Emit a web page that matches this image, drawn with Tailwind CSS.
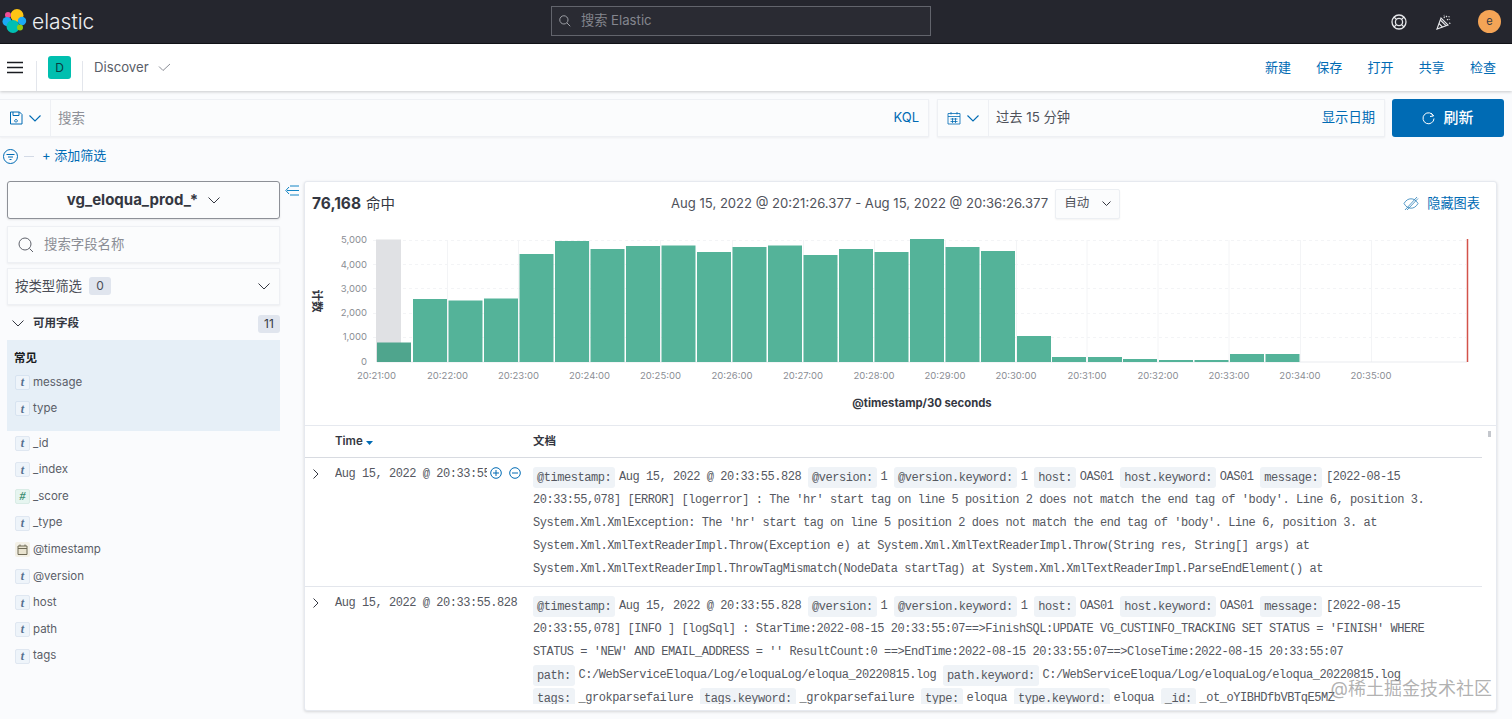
<!DOCTYPE html>
<html lang="zh">
<head>
<meta charset="utf-8">
<title>Discover - Elastic</title>
<script src="https://cdn.jsdelivr.net/npm/@tailwindcss/browser@4"></script>
</head>
<body class="h-[719px] w-[1512px] overflow-hidden bg-[#fafbfd] font-['Inter','Noto_Sans_CJK_SC',sans-serif] text-[#343741]">

<!-- top nav -->
<header class="flex h-[44px] items-center border-b border-[#111318] bg-[#25262e] pr-[11px] pl-[2px]">
  <div class="flex w-[549px] items-center gap-[5px]">
    <svg class="mb-[2px] h-[24px] w-[25px]" viewBox="0 0 25 24">
      <circle cx="15" cy="6.500" r="6.500" fill="#fec514"/>
      <circle cx="6" cy="6" r="3" fill="#f04e98"/>
      <circle cx="5" cy="12.500" r="4.500" fill="#1ba9f5"/>
      <circle cx="11" cy="17.500" r="6.500" fill="#00bfb3"/>
      <circle cx="20" cy="12" r="4.200" fill="#1ba9f5"/>
      <circle cx="18" cy="18.500" r="3" fill="#93c90e"/>
    </svg>
    <span class="text-[21px] leading-none font-light text-[#eef0f3]">elastic</span>
  </div>
  <div class="mb-[1px] flex h-[30px] w-[380px] items-center gap-[10px] border border-[#62646c] bg-[#2a2b33] px-[7px] text-[13.200px] text-[#84868e]">
    <svg class="h-[12px] w-[12px]" viewBox="0 0 16 16" fill="none" stroke="#a0a2a9" stroke-width="1.300"><circle cx="6.500" cy="6.500" r="5.500"/><path d="M10.500 10.500 15 15"/></svg>
    <span>搜索 Elastic</span>
  </div>
  <div class="flex flex-1 items-center justify-end">
    <svg class="mr-[29px] h-[16px] w-[16px]" viewBox="0 0 16 16" fill="none" stroke="#e6e7ea" stroke-width="1.300"><circle cx="8" cy="8" r="7"/><circle cx="8" cy="8" r="3.600"/><path d="M3 3l2.400 2.400M13 3l-2.400 2.400M3 13l2.400-2.400M13 13l-2.400-2.400"/></svg>
    <svg class="mr-[26px] h-[16px] w-[16px]" viewBox="0 0 16 16" fill="none" stroke="#e6e7ea" stroke-width="1.100"><path d="M1 15 5 4l7 7z"/><path d="M3 9.500 6.500 13M4.300 6 10 11.700"/><path d="M8 4c.5-1 .5-2 0-3M11 6c1-1 2-1 3-.5M10 3l1-1M13 9l1.500 .5M12.500 2.500l1 .5" stroke-dasharray="1.500 1"/></svg>
    <div class="flex h-[23px] w-[23px] items-center justify-center rounded-full bg-[#f4a456] text-[11px] text-[#343741]">e</div>
  </div>
</header>

<!-- breadcrumb bar -->
<div class="flex h-[47px] items-stretch justify-between bg-white shadow-[0_1px_3px_rgba(0,0,0,0.2)]">
  <div class="flex items-stretch">
    <div class="flex w-[36px] items-center pl-[7px]">
      <svg class="h-[13px] w-[16px]" viewBox="0 0 16 13" fill="none" stroke="#1a1c21" stroke-width="1.500"><path d="M0 1.500h16M0 6.500h16M0 11.500h16"/></svg>
    </div>
    <span class="h-[30px] w-px self-end bg-[#e3e6ec]"></span>
    <div class="flex w-[45px] items-center justify-center">
      <div class="flex h-[23px] w-[23px] items-center justify-center rounded-[3px] bg-[#00bfaf] text-[12px] text-[#0b3b3f]">D</div>
    </div>
    <span class="h-[30px] w-px self-end bg-[#e3e6ec]"></span>
    <div class="flex items-center gap-[9px] pl-[11px] text-[13.200px] text-[#5a5e68]">
      <span>Discover</span>
      <svg class="h-[9px] w-[13px]" viewBox="0 0 13 9" fill="none" stroke="#8a8d96" stroke-width="1"><path d="m1 3.500 4 4L12 1"/></svg>
    </div>
  </div>
  <nav class="flex items-center gap-[25.250px] pr-[16px] text-[13px] text-[#006bb4]">
    <a>新建</a><a>保存</a><a>打开</a><a>共享</a><a>检查</a>
  </nav>
</div>

<!-- query bar -->
<div class="mt-[8px] flex h-[38px] items-stretch pr-[8px]">
  <div class="flex flex-1 items-stretch border-y border-r border-[#eef0f4] bg-[#fbfcfd] shadow-[0_1px_2px_rgba(0,0,0,0.05)]">
    <div class="flex w-[51px] items-center justify-center gap-[6px] border-r border-[#eef0f4]">
      <svg class="h-[14px] w-[14px]" viewBox="0 0 14 14" fill="none" stroke="#006bb4" stroke-width="1"><path d="M1.500 1h9L13 3.500V13H1.500zM4 1v3.500h6V1M7 8.500a1.300 1.300 0 1 0 .01 0"/></svg>
      <svg class="h-[7px] w-[12px]" viewBox="0 0 12 7" fill="none" stroke="#006bb4" stroke-width="1.100"><path d="m.5.5 5.500 5.500L11.500.5"/></svg>
    </div>
    <div class="flex flex-1 items-center justify-between pr-[9px] pl-[7px] text-[13.500px]">
      <span class="pt-[1px] text-[#8e9097]">搜索</span>
      <span class="text-[13px] text-[#006bb4]">KQL</span>
    </div>
  </div>
  <div class="ml-[8px] flex w-[448px] items-stretch border border-[#eef0f4] bg-[#fbfcfd] shadow-[0_1px_2px_rgba(0,0,0,0.05)]">
    <div class="flex w-[51px] items-center justify-center gap-[6px] border-r border-[#eef0f4]">
      <svg class="h-[14px] w-[14px]" viewBox="0 0 14 14" fill="none" stroke="#006bb4" stroke-width="0.800"><path d="M1 2.500h12V13H1zM1 5.500h12M4 1v2.500M10 1v2.500M3.500 8h7M3.500 10.500h7M5.500 7v5M8.500 7v5"/></svg>
      <svg class="h-[7px] w-[12px]" viewBox="0 0 12 7" fill="none" stroke="#006bb4" stroke-width="1.100"><path d="m.5.5 5.500 5.500L11.500.5"/></svg>
    </div>
    <div class="flex flex-1 items-center justify-between pr-[9px] pl-[7px] text-[13.300px]">
      <span class="text-[#4f525b]">过去 15 分钟</span>
      <span class="text-[#006bb4]">显示日期</span>
    </div>
  </div>
  <button class="ml-[7px] flex w-[112px] items-center justify-center gap-[8px] rounded-[3px] bg-[#006bb4] text-[15px] font-medium text-white">
    <svg class="h-[13px] w-[13px]" viewBox="0 0 13 13" fill="none" stroke="#fff" stroke-width="1"><path d="M11.500 4A5.500 5.500 0 1 0 12 6.500M9 1l2.500 3L8 4.500"/></svg>
    刷新
  </button>
</div>

<!-- filter row -->
<div class="mt-[6px] flex h-[26px] items-center pl-[3px] text-[13px] text-[#006bb4]">
  <svg class="h-[15px] w-[15px]" viewBox="0 0 15 15" fill="none" stroke="#006bb4" stroke-width="1"><circle cx="7.500" cy="7.500" r="7"/><path d="M3.500 5.500h8M5 8h5M6.500 10.500h2"/></svg>
  <span class="ml-[6px] h-[1px] w-[10px] bg-[#d3dae6]"></span>
  <span class="ml-[8px]">+ 添加筛选</span>
</div>

<!-- content -->
<div class="mt-[12px] flex items-start">
  <!-- field sidebar -->
  <aside class="ml-[7px] w-[273px] shrink-0">
    <div class="flex h-[38px] items-center justify-center gap-[10px] rounded-[3px] border border-[#8d9097] bg-[#fbfcfd] text-[15px] font-bold text-[#343741] shadow-[0_1px_2px_rgba(0,0,0,0.1)]">
      <span>vg_eloqua_prod_*</span>
      <svg class="h-[7px] w-[12px]" viewBox="0 0 12 7" fill="none" stroke="#343741" stroke-width="1"><path d="m.5.5 5.500 5.500L11.500.5"/></svg>
    </div>
    <div class="mt-[7px] flex h-[37px] items-center gap-[10px] border border-[#eef0f4] bg-[#fbfcfd] pl-[10px] text-[13.400px] text-[#8a8d94] shadow-[0_1px_2px_rgba(0,0,0,0.06)]">
      <svg class="h-[16px] w-[16px]" viewBox="0 0 16 16" fill="none" stroke="#5f626b" stroke-width="1"><circle cx="7" cy="7" r="6"/><path d="m11.500 11.500 3.500 3.500"/></svg>
      <span>搜索字段名称</span>
    </div>
    <div class="mt-[5px] flex h-[37px] items-center justify-between border border-[#eef0f4] bg-[#fbfcfd] pr-[9px] pl-[7px] text-[13.400px] text-[#4a4d56] shadow-[0_1px_2px_rgba(0,0,0,0.06)]">
      <div class="flex items-center gap-[7px]">
        <span>按类型筛选</span>
        <span class="flex h-[18px] w-[22px] items-center justify-center rounded-[3px] bg-[#e0e5ee] text-[12px]">0</span>
      </div>
      <svg class="h-[7px] w-[12px]" viewBox="0 0 12 7" fill="none" stroke="#343741" stroke-width="1"><path d="m.5.5 5.500 5.500L11.500.5"/></svg>
    </div>
    <div class="flex h-[35px] items-center justify-between pt-[2px] text-[11.500px] font-semibold text-[#343741]">
      <div class="flex items-center gap-[9px] pl-[5px]">
        <svg class="h-[7px] w-[12px]" viewBox="0 0 12 7" fill="none" stroke="#343741" stroke-width="1"><path d="m.5.5 5.500 5.500L11.500.5"/></svg>
        <span>可用字段</span>
      </div>
      <span class="flex h-[18px] w-[22px] items-center justify-center rounded-[3px] bg-[#e0e5ee] text-[12px] font-normal">11</span>
    </div>
    <div class="h-[91px] bg-[#e6eff7] pt-[12px] pl-[7px]">
      <div class="text-[11.500px] leading-[12px] font-bold text-[#1a1c21]">常见</div>
      <ul class="mt-[5px] ml-[1px]">
        <li class="flex h-[26.500px] items-center gap-[3px] text-[11.500px] text-[#5a5e68]"><span class="flex h-[15px] w-[15px] items-center justify-center rounded-[2px] border border-[#d7e3f0] bg-[#eef4fa] font-['Liberation_Serif',serif] text-[12px] font-bold text-[#55708f] italic">t</span>message</li>
        <li class="flex h-[26.500px] items-center gap-[3px] text-[11.500px] text-[#5a5e68]"><span class="flex h-[15px] w-[15px] items-center justify-center rounded-[2px] border border-[#d7e3f0] bg-[#eef4fa] font-['Liberation_Serif',serif] text-[12px] font-bold text-[#55708f] italic">t</span>type</li>
      </ul>
    </div>
    <ul class="mt-[-1px] pl-[8px]">
      <li class="flex h-[26.600px] items-center gap-[3px] text-[11.500px] text-[#5a5e68]"><span class="flex h-[15px] w-[15px] items-center justify-center rounded-[2px] border border-[#dfe7f1] bg-[#eef4fa] font-['Liberation_Serif',serif] text-[12px] font-bold text-[#55708f] italic">t</span>_id</li>
      <li class="flex h-[26.600px] items-center gap-[3px] text-[11.500px] text-[#5a5e68]"><span class="flex h-[15px] w-[15px] items-center justify-center rounded-[2px] border border-[#dfe7f1] bg-[#eef4fa] font-['Liberation_Serif',serif] text-[12px] font-bold text-[#55708f] italic">t</span>_index</li>
      <li class="flex h-[26.600px] items-center gap-[3px] text-[11.500px] text-[#5a5e68]"><span class="flex h-[15px] w-[15px] items-center justify-center rounded-[2px] border border-[#d9ece6] bg-[#e6f5f0] font-['Liberation_Serif',serif] text-[12px] font-bold text-[#3f8f75] italic">#</span>_score</li>
      <li class="flex h-[26.600px] items-center gap-[3px] text-[11.500px] text-[#5a5e68]"><span class="flex h-[15px] w-[15px] items-center justify-center rounded-[2px] border border-[#dfe7f1] bg-[#eef4fa] font-['Liberation_Serif',serif] text-[12px] font-bold text-[#55708f] italic">t</span>_type</li>
      <li class="flex h-[26.600px] items-center gap-[3px] text-[11.500px] text-[#5a5e68]"><span class="flex h-[15px] w-[15px] items-center justify-center rounded-[2px] bg-[#f3f0e6]"><svg class="h-[11px] w-[11px]" viewBox="0 0 11 11" fill="#e9e3cf" stroke="#6f6a55" stroke-width="1"><path d="M1 2h9v8.500H1zM1 4.500h9M3 .5V2M8 .5V2"/></svg></span>@timestamp</li>
      <li class="flex h-[26.600px] items-center gap-[3px] text-[11.500px] text-[#5a5e68]"><span class="flex h-[15px] w-[15px] items-center justify-center rounded-[2px] border border-[#dfe7f1] bg-[#eef4fa] font-['Liberation_Serif',serif] text-[12px] font-bold text-[#55708f] italic">t</span>@version</li>
      <li class="flex h-[26.600px] items-center gap-[3px] text-[11.500px] text-[#5a5e68]"><span class="flex h-[15px] w-[15px] items-center justify-center rounded-[2px] border border-[#dfe7f1] bg-[#eef4fa] font-['Liberation_Serif',serif] text-[12px] font-bold text-[#55708f] italic">t</span>host</li>
      <li class="flex h-[26.600px] items-center gap-[3px] text-[11.500px] text-[#5a5e68]"><span class="flex h-[15px] w-[15px] items-center justify-center rounded-[2px] border border-[#dfe7f1] bg-[#eef4fa] font-['Liberation_Serif',serif] text-[12px] font-bold text-[#55708f] italic">t</span>path</li>
      <li class="flex h-[26.600px] items-center gap-[3px] text-[11.500px] text-[#5a5e68]"><span class="flex h-[15px] w-[15px] items-center justify-center rounded-[2px] border border-[#dfe7f1] bg-[#eef4fa] font-['Liberation_Serif',serif] text-[12px] font-bold text-[#55708f] italic">t</span>tags</li>
    </ul>
  </aside>

  <!-- collapse toggle -->
  <div class="w-[24px] shrink-0 pt-[4px] pl-[5px]">
    <svg class="h-[11px] w-[14px]" viewBox="0 0 14 11" fill="none" stroke="#1384c4" stroke-width="1"><path d="M4 2 .8 5.500 4 9M5 1h9M2 5.500h12M5 10h9"/></svg>
  </div>

  <!-- results panel -->
  <main class="relative h-[530px] w-[1193px] shrink-0 overflow-hidden rounded-[3px] border border-[#e6e9ef] bg-white shadow-[0_1px_3px_rgba(0,0,0,0.15)]">
    <div class="flex h-[43px] items-center pr-[16px] pl-[7px]">
      <div class="flex w-[359px] items-baseline gap-[5px]">
        <b class="text-[15.500px] font-bold text-[#343741]">76,168</b>
        <span class="text-[14.500px] text-[#343741]">命中</span>
      </div>
      <div class="flex items-center gap-[7px] text-[13.100px] text-[#4f525b]">
        <span>Aug 15, 2022 @ 20:21:26.377 - Aug 15, 2022 @ 20:36:26.377</span>
        <span class="flex h-[30px] w-[65px] items-center justify-between rounded-[2px] border border-[#eceff3] bg-[#fbfcfd] px-[8px] text-[12.500px] shadow-[0_1px_2px_rgba(0,0,0,0.05)]">自动
          <svg class="h-[5px] w-[9px]" viewBox="0 0 9 5" fill="none" stroke="#343741" stroke-width="1"><path d="m.5.500 4 4 4-4"/></svg>
        </span>
      </div>
      <div class="ml-auto flex items-center gap-[8px] text-[13.200px] text-[#006bb4]">
        <svg class="h-[15px] w-[16px]" viewBox="0 0 16 15" fill="none" stroke="#2a7fb8" stroke-width="0.800"><path d="M1 7.500C3 4 5.500 2.800 8 2.800s5 1.200 7 4.700c-2 3.500-4.500 4.700-7 4.700S3 11 1 7.500z"/><path d="M2 14 14 1M4 14 15 2.500"/></svg>
        <span>隐藏图表</span>
      </div>
    </div>

    <!-- histogram -->
    <svg class="block h-[200px] w-[1191px]" viewBox="305 225 1191 200" font-family="Inter, sans-serif">
      <g stroke="#f3f4f6" stroke-width="1">
        <path d="M373 240.500H1466M373 264.500H1466M373 288.500H1466M373 313.500H1466M373 337.500H1466" stroke-dasharray="3 3"/>
        <path d="M447.500 240V362M518.500 240V362M589.500 240V362M660.500 240V362M732.500 240V362M803.500 240V362M874.500 240V362M945.500 240V362M1016.500 240V362M1087 240V362M1158 240V362M1229 240V362M1300.500 240V362M1371.500 240V362"/>
        <path d="M377 362H1467" stroke="#e9ebef"/>
      </g>
      <rect x="376" y="239.500" width="25" height="122.500" fill="#e0e1e4"/>
      <g fill="#54b399">
        <rect x="377" y="342.500" width="34" height="19.500" fill="#4fa58d"/>
        <rect x="413" y="299" width="34" height="63"/>
        <rect x="448.500" y="300.500" width="34" height="61.500"/>
        <rect x="484" y="298.500" width="34" height="63.500"/>
        <rect x="519.500" y="254" width="34" height="108"/>
        <rect x="555" y="241" width="34" height="121"/>
        <rect x="590.500" y="249" width="34" height="113"/>
        <rect x="626" y="246" width="34" height="116"/>
        <rect x="661.500" y="245.500" width="34" height="116.500"/>
        <rect x="697" y="252" width="34" height="110"/>
        <rect x="732.500" y="247" width="34" height="115"/>
        <rect x="768" y="245.500" width="34" height="116.500"/>
        <rect x="803.500" y="255" width="34" height="107"/>
        <rect x="839" y="249" width="34" height="113"/>
        <rect x="874.500" y="252" width="34" height="110"/>
        <rect x="910" y="239" width="34" height="123"/>
        <rect x="945.500" y="247" width="34" height="115"/>
        <rect x="981" y="251" width="34" height="111"/>
        <rect x="1017" y="336" width="34" height="26"/>
        <rect x="1052" y="357" width="34" height="5"/>
        <rect x="1088" y="357" width="34" height="5"/>
        <rect x="1123" y="359" width="34" height="3"/>
        <rect x="1159" y="360" width="34" height="2"/>
        <rect x="1194.500" y="360" width="34" height="2"/>
        <rect x="1230" y="354" width="34" height="8"/>
        <rect x="1265.500" y="354" width="34" height="8"/>
      </g>
      <path d="M1467.500 239V362" stroke="#d3524a" stroke-width="1.500"/>
      <g font-size="9.500" fill="#8a8d94" text-anchor="end">
        <text x="367" y="243">5,000</text>
        <text x="367" y="267.500">4,000</text>
        <text x="367" y="291.500">3,000</text>
        <text x="367" y="316">2,000</text>
        <text x="367" y="340">1,000</text>
        <text x="367" y="364.500">0</text>
      </g>
      <g font-size="9.500" fill="#8a8d94" text-anchor="middle">
        <text x="376.500" y="379">20:21:00</text>
        <text x="447.500" y="379">20:22:00</text>
        <text x="518.500" y="379">20:23:00</text>
        <text x="589.500" y="379">20:24:00</text>
        <text x="660.500" y="379">20:25:00</text>
        <text x="732" y="379">20:26:00</text>
        <text x="803" y="379">20:27:00</text>
        <text x="874" y="379">20:28:00</text>
        <text x="945" y="379">20:29:00</text>
        <text x="1016" y="379">20:30:00</text>
        <text x="1087" y="379">20:31:00</text>
        <text x="1158" y="379">20:32:00</text>
        <text x="1229" y="379">20:33:00</text>
        <text x="1300" y="379">20:34:00</text>
        <text x="1371" y="379">20:35:00</text>
      </g>
      <text x="922" y="407" font-size="11.300" font-weight="700" fill="#343741" text-anchor="middle">@timestamp/30 seconds</text>
      <text transform="translate(313 301) rotate(90)" font-size="11.500" font-weight="700" fill="#343741" text-anchor="middle" font-family="Noto Sans CJK SC, sans-serif">计数</text>
    </svg>

    <!-- doc table -->
    <div class="border-t border-[#e6e9ef]">
      <div class="mr-[14px] flex h-[32px] items-center border-b border-[#d8dbe1] text-[11.500px] font-semibold text-[#343741]">
        <div class="flex w-[228px] items-center gap-[3px] pl-[30px]">Time
          <svg class="mt-[3px] h-[4px] w-[7px]" viewBox="0 0 7 4" fill="#006bb4"><path d="M0 0h7L3.500 4z"/></svg>
        </div>
        <div>文档</div>
      </div>

      <div class="mr-[14px] flex h-[129px] border-b border-[#e3e6ec]">
        <div class="relative flex w-[228px] shrink-0 pt-[9px] pl-[8px]">
          <svg class="mt-[2px] h-[10px] w-[6px]" viewBox="0 0 6 10" fill="none" stroke="#343741" stroke-width="1"><path d="m.5.500 4.500 4.500L.5 9.500"/></svg>
          <span class="ml-[16px] w-[152px] overflow-hidden font-['Liberation_Mono',monospace] text-[12px] leading-[14px] tracking-[-0.45px] whitespace-nowrap text-[#555861]">Aug 15, 2022 @ 20:33:55.828</span>
          <svg class="absolute top-[9px] left-[185px] h-[12px] w-[12px]" viewBox="0 0 12 12" fill="none" stroke="#006bb4" stroke-width="1"><circle cx="6" cy="6" r="5.300"/><path d="M6 3v6M3 6h6"/></svg>
          <svg class="absolute top-[9px] left-[204px] h-[12px] w-[12px]" viewBox="0 0 12 12" fill="none" stroke="#006bb4" stroke-width="1"><circle cx="6" cy="6" r="5.300"/><path d="M3 6h6"/></svg>
        </div>
        <div class="pt-[8px] font-['Liberation_Mono',monospace] text-[12px] leading-[23px] tracking-[-0.45px] whitespace-nowrap text-[#555861]">
          <div><span class="mr-[-3px] rounded-[3px] bg-[#eff3f7] px-[4px] py-[3.500px]">@timestamp:</span> Aug 15, 2022 @ 20:33:55.828 <span class="mr-[-3px] rounded-[3px] bg-[#eff3f7] px-[4px] py-[3.500px]">@version:</span> 1 <span class="mr-[-3px] rounded-[3px] bg-[#eff3f7] px-[4px] py-[3.500px]">@version.keyword:</span> 1 <span class="mr-[-3px] rounded-[3px] bg-[#eff3f7] px-[4px] py-[3.500px]">host:</span> OAS01 <span class="mr-[-3px] rounded-[3px] bg-[#eff3f7] px-[4px] py-[3.500px]">host.keyword:</span> OAS01 <span class="mr-[-3px] rounded-[3px] bg-[#eff3f7] px-[4px] py-[3.500px]">message:</span> [2022-08-15</div>
          <div>20:33:55,078] [ERROR] [logerror] : The 'hr' start tag on line 5 position 2 does not match the end tag of 'body'. Line 6, position 3.</div>
          <div>System.Xml.XmlException: The 'hr' start tag on line 5 position 2 does not match the end tag of 'body'. Line 6, position 3. at</div>
          <div>System.Xml.XmlTextReaderImpl.Throw(Exception e) at System.Xml.XmlTextReaderImpl.Throw(String res, String[] args) at</div>
          <div>System.Xml.XmlTextReaderImpl.ThrowTagMismatch(NodeData startTag) at System.Xml.XmlTextReaderImpl.ParseEndElement() at</div>
        </div>
      </div>

      <div class="mr-[14px] flex h-[117px] overflow-hidden">
        <div class="flex w-[228px] shrink-0 pt-[9px] pl-[8px]">
          <svg class="mt-[2px] h-[10px] w-[6px]" viewBox="0 0 6 10" fill="none" stroke="#343741" stroke-width="1"><path d="m.5.500 4.500 4.500L.5 9.500"/></svg>
          <span class="ml-[16px] font-['Liberation_Mono',monospace] text-[12px] leading-[14px] tracking-[-0.45px] whitespace-nowrap text-[#555861]">Aug 15, 2022 @ 20:33:55.828</span>
        </div>
        <div class="pt-[8px] font-['Liberation_Mono',monospace] text-[12px] leading-[23px] tracking-[-0.45px] whitespace-nowrap text-[#555861]">
          <div><span class="mr-[-3px] rounded-[3px] bg-[#eff3f7] px-[4px] py-[3.500px]">@timestamp:</span> Aug 15, 2022 @ 20:33:55.828 <span class="mr-[-3px] rounded-[3px] bg-[#eff3f7] px-[4px] py-[3.500px]">@version:</span> 1 <span class="mr-[-3px] rounded-[3px] bg-[#eff3f7] px-[4px] py-[3.500px]">@version.keyword:</span> 1 <span class="mr-[-3px] rounded-[3px] bg-[#eff3f7] px-[4px] py-[3.500px]">host:</span> OAS01 <span class="mr-[-3px] rounded-[3px] bg-[#eff3f7] px-[4px] py-[3.500px]">host.keyword:</span> OAS01 <span class="mr-[-3px] rounded-[3px] bg-[#eff3f7] px-[4px] py-[3.500px]">message:</span> [2022-08-15</div>
          <div>20:33:55,078] [INFO ] [logSql] : StarTime:2022-08-15 20:33:55:07==>FinishSQL:UPDATE VG_CUSTINFO_TRACKING SET STATUS = 'FINISH' WHERE</div>
          <div>STATUS = 'NEW' AND EMAIL_ADDRESS = '' ResultCount:0 ==>EndTime:2022-08-15 20:33:55:07==>CloseTime:2022-08-15 20:33:55:07</div>
          <div><span class="mr-[-3px] rounded-[3px] bg-[#eff3f7] px-[4px] py-[3.500px]">path:</span> C:/WebServiceEloqua/Log/eloquaLog/eloqua_20220815.log <span class="mr-[-3px] rounded-[3px] bg-[#eff3f7] px-[4px] py-[3.500px]">path.keyword:</span> C:/WebServiceEloqua/Log/eloquaLog/eloqua_20220815.log</div>
          <div><span class="mr-[-3px] rounded-[3px] bg-[#eff3f7] px-[4px] py-[3.500px]">tags:</span> _grokparsefailure <span class="mr-[-3px] rounded-[3px] bg-[#eff3f7] px-[4px] py-[3.500px]">tags.keyword:</span> _grokparsefailure <span class="mr-[-3px] rounded-[3px] bg-[#eff3f7] px-[4px] py-[3.500px]">type:</span> eloqua <span class="mr-[-3px] rounded-[3px] bg-[#eff3f7] px-[4px] py-[3.500px]">type.keyword:</span> eloqua <span class="mr-[-3px] rounded-[3px] bg-[#eff3f7] px-[4px] py-[3.500px]">_id:</span> _ot_oYIBHDfbVBTqE5MZ</div>
        </div>
      </div>
    </div>

    <!-- scrollbar thumb -->
    <div class="absolute top-[249px] right-[5px] h-[6px] w-[3px] bg-[#c4c7cd]"></div>
    <!-- image watermark -->
    <div class="absolute right-[4px] bottom-[9px] text-[18px] leading-[24px] text-[#8f8f8f]/70">@稀土掘金技术社区</div>
  </main>
</div>
</body>
</html>
